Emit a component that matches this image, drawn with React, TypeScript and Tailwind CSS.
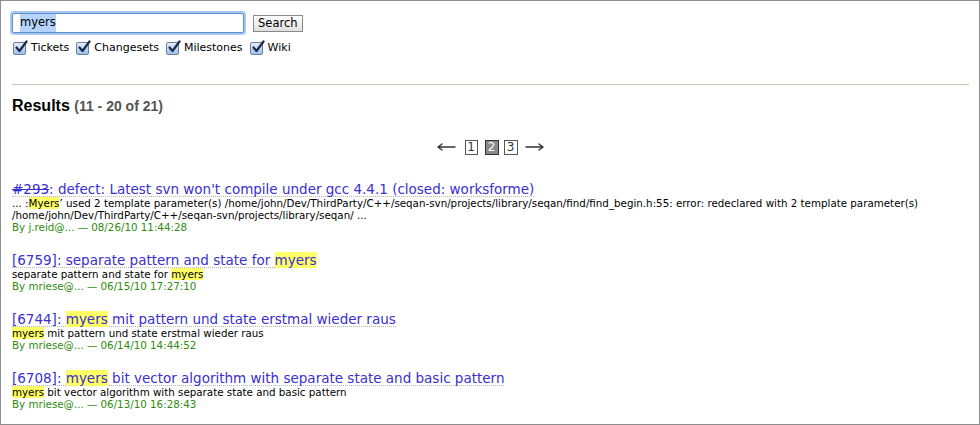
import React from "react";

const Check = ({ label }: { label: string }) => (
  <label className="flex items-center gap-[5px]">
    <span className="relative inline-block h-[13px] w-[13px] rounded-[2px] border border-[#6f7f99] bg-gradient-to-b from-[#e4eefb] to-[#9cc1ec]">
      <svg viewBox="0 0 14 14" className="absolute left-[0px] top-[-3px] h-[14px] w-[14px]">
        <path d="M2.5 7.5 L5.5 11 L12.5 1.5" fill="none" stroke="#1b2a4a" strokeWidth="2.2" strokeLinecap="round" strokeLinejoin="round" />
      </svg>
    </span>
    <span>{label}</span>
  </label>
);

const Hl = ({ children }: { children: React.ReactNode }) => (
  <span className="bg-[#ffff66]">{children}</span>
);

const Arrow = ({ dir }: { dir: "l" | "r" }) => (
  <svg viewBox="0 0 19 10" className="h-[10px] w-[19px]">
    {dir === "l" ? (
      <path d="M1 5 H18 M1 5 L5 2 M1 5 L5 8" fill="none" stroke="#333" strokeWidth="1.4" strokeLinecap="round" />
    ) : (
      <path d="M1 5 H18 M18 5 L14 2 M18 5 L14 8" fill="none" stroke="#333" strokeWidth="1.4" strokeLinecap="round" />
    )}
  </svg>
);

const Result = ({
  title,
  excerpt,
  meta,
}: {
  title: React.ReactNode;
  excerpt: React.ReactNode;
  meta: string;
}) => (
  <div className="mb-[20px]">
    <div className="text-[13.5px] leading-[13px] text-[#3a2fcf]">
      <span className="inline-block border-b border-dotted border-[#b5b5b5]">{title}</span>
    </div>
    <div className="text-[10.3px] leading-[12px] text-black">{excerpt}</div>
    <div className="text-[10.3px] leading-[13px] text-[#2e8b0e]">{meta}</div>
  </div>
);

export default function App() {
  return (
    <div
      className="h-[425px] w-[980px] overflow-hidden border border-[#8e8e8e] bg-white text-black"
      style={{ fontFamily: '"DejaVu Sans", Verdana, sans-serif' }}
    >
      <div className="px-[11px] pt-[12px]">
        <div className="flex items-center gap-[9px]">
          <div className="flex h-[20px] w-[232px] items-center rounded-[2px] border border-[#5b8fd0] bg-white pl-[7px] shadow-[0_0_0_2px_#a9c8ef] text-[11.5px]">
            <span className="bg-[#b5d3fb]">myers</span>
          </div>
          <button className="h-[17px] border border-[#8a8a8a] bg-gradient-to-b from-[#ffffff] to-[#e0e0e0] px-[4px] text-[11.5px] leading-[14px]">
            Search
          </button>
        </div>
        <div className="mt-[7px] flex items-center gap-[7px] pl-[1px] text-[11px]">
          <Check label="Tickets" />
          <Check label="Changesets" />
          <Check label="Milestones" />
          <Check label="Wiki" />
        </div>
        <div className="mt-[27px] h-px w-[957px] bg-[#c7c7b4]" />
        <h1
          className="mt-[12px] text-[16px] font-bold leading-[18px]"
          style={{ fontFamily: '"Liberation Sans", Arial, sans-serif' }}
        >
          Results <span className="text-[14px] text-[#555555]">(11 - 20 of 21)</span>
        </h1>
        <div className="mt-[25px] flex items-center justify-center text-[12px] text-[#333]">
          <Arrow dir="l" />
          <span className="ml-[9px] flex h-[15px] w-[13px] items-center justify-center border border-[#555] leading-none">1</span>
          <span className="ml-[7px] flex h-[15px] w-[14px] items-center justify-center border border-[#333] bg-[#8a8a8a] leading-none text-white">2</span>
          <span className="ml-[5px] flex h-[15px] w-[14px] items-center justify-center border border-[#555] leading-none">3</span>
          <span className="ml-[7px]">
            <Arrow dir="r" />
          </span>
        </div>
        <div className="mt-[28px]">
          <Result
            title={
              <>
                <span className="line-through">#293</span>: defect: Latest svn won't compile under gcc 4.4.1 (closed: worksforme)
              </>
            }
            excerpt={
              <>
                ... :<Hl>Myers</Hl>’ used 2 template parameter(s) /home/john/Dev/ThirdParty/C++/seqan-svn/projects/library/seqan/find/find_begin.h:55: error: redeclared with 2 template parameter(s)
                <br />
                /home/john/Dev/ThirdParty/C++/seqan-svn/projects/library/seqan/ ...
              </>
            }
            meta="By j.reid@... — 08/26/10 11:44:28"
          />
          <Result
            title={
              <>
                [6759]: separate pattern and state for <Hl>myers</Hl>
              </>
            }
            excerpt={
              <>
                separate pattern and state for <Hl>myers</Hl>
              </>
            }
            meta="By mriese@... — 06/15/10 17:27:10"
          />
          <Result
            title={
              <>
                [6744]: <Hl>myers</Hl> mit pattern und state erstmal wieder raus
              </>
            }
            excerpt={
              <>
                <Hl>myers</Hl> mit pattern und state erstmal wieder raus
              </>
            }
            meta="By mriese@... — 06/14/10 14:44:52"
          />
          <Result
            title={
              <>
                [6708]: <Hl>myers</Hl> bit vector algorithm with separate state and basic pattern
              </>
            }
            excerpt={
              <>
                <Hl>myers</Hl> bit vector algorithm with separate state and basic pattern
              </>
            }
            meta="By mriese@... — 06/13/10 16:28:43"
          />
        </div>
      </div>
    </div>
  );
}
